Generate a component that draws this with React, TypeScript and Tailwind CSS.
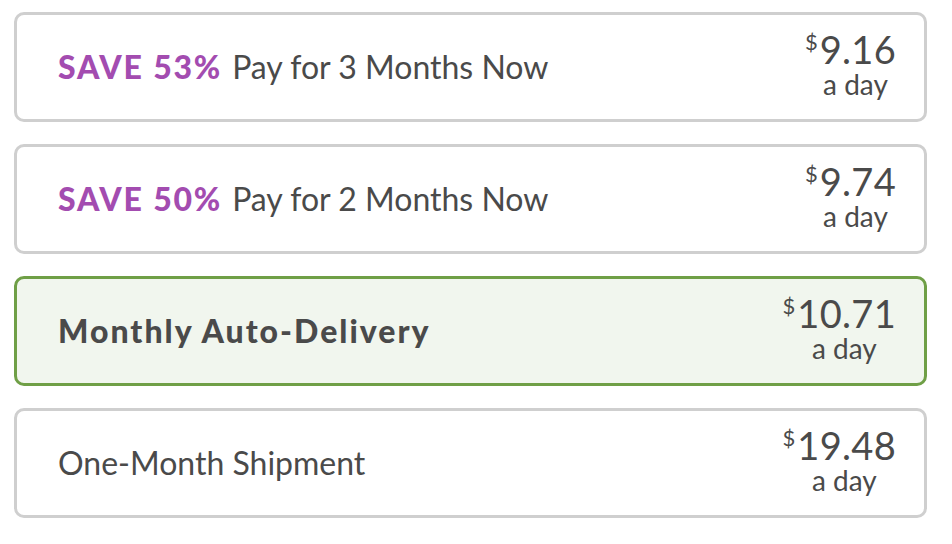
import React from "react";

type Plan = {
  save?: string;
  label: string;
  price: string;
  selected?: boolean;
};

const plans: Plan[] = [
  { save: "SAVE 53%", label: "Pay for 3 Months Now", price: "9.16" },
  { save: "SAVE 50%", label: "Pay for 2 Months Now", price: "9.74" },
  { label: "Monthly Auto-Delivery", price: "10.71", selected: true },
  { label: "One-Month Shipment", price: "19.48" },
];

const PlanCard: React.FC<{ plan: Plan }> = ({ plan }) => {
  return (
    <div
      className={
        plan.selected
          ? "flex h-[110px] items-center justify-between rounded-[10px] border-[3px] border-[#6f9f46] bg-[#f1f6ee] pl-[41px] pr-[28px]"
          : "flex h-[110px] items-center justify-between rounded-[10px] border-[3px] border-[#cfcfcf] bg-white pl-[41px] pr-[28px]"
      }
    >
      <div className="text-[32px] leading-none text-[#4a4a4a]">
        {plan.save && (
          <span className="mr-[10px] font-black tracking-[1.8px] text-[#a34cb0]">{plan.save}</span>
        )}
        {plan.selected ? (
          <span className="font-black tracking-[2px]">{plan.label}</span>
        ) : (
          <span>{plan.label}</span>
        )}
      </div>
      <div className="flex flex-col items-center pb-[4px] text-[#4a4a4a]">
        <div className="flex h-[34px] items-start leading-[34px]">
          <span className="mr-[2px] text-[22px] leading-[20px]">$</span>
          <span className="text-[38px] tracking-[0.3px]">{plan.price}</span>
        </div>
        <div className="mt-[4px] h-[28px] pl-[10px] text-[28px] leading-[28px]">a day</div>
      </div>
    </div>
  );
};

const App: React.FC = () => {
  return (
    <div className="min-h-[544px] w-[952px] bg-white pt-[12px] pl-[14px] font-['Lato',sans-serif]">
      <div className="flex w-[913px] flex-col gap-[22px]">
        {plans.map((p) => (
          <PlanCard key={p.label} plan={p} />
        ))}
      </div>
    </div>
  );
};

export default App;
